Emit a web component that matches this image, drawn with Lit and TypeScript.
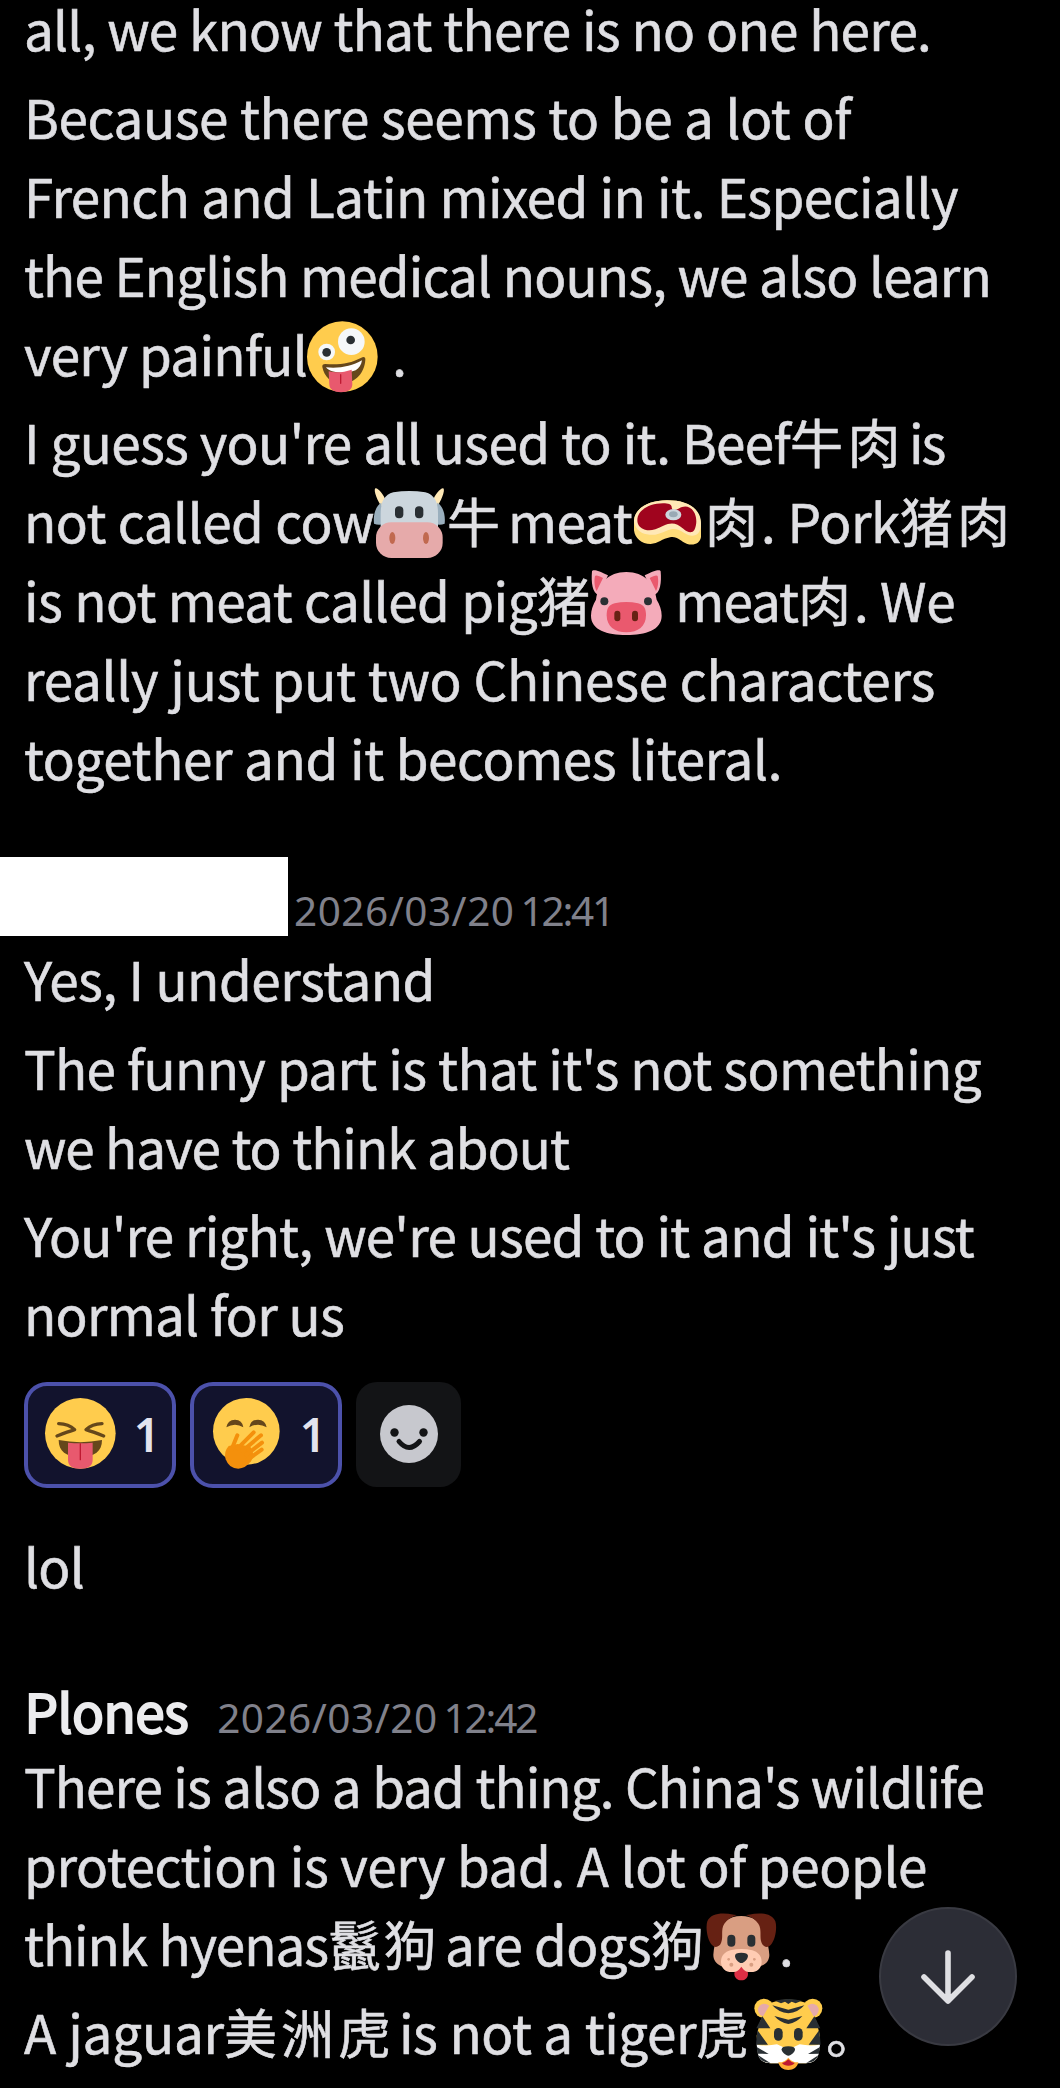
import { LitElement, html, css, svg } from "lit";
import type { SVGTemplateResult } from "lit";
import { customElement, property } from "lit/decorators.js";

interface TextRun {
  text: string;
  width: number;
}

interface EmojiRun {
  emoji: string;
}

type Run = TextRun | EmojiRun;
type Line = Run[];

const t = (text: string, width: number): TextRun => ({ text, width });
const e = (emoji: string): EmojiRun => ({ emoji });

const emojis: Record<string, SVGTemplateResult> = {
  zany: svg`
    <circle cx="106" cy="107" r="106" fill="#ffcc4d" />
    <circle cx="133" cy="62" r="40" fill="#f5f8fa" />
    <circle cx="59" cy="93" r="25" fill="#f5f8fa" />
    <circle cx="131" cy="57" r="13" fill="#292f33" />
    <circle cx="59" cy="94" r="13" fill="#292f33" />
    <path d="M46 138c-1-6 2-9 9-9 44 3 75-2 108-19 8-4 13-1 12 7-3 39-29 68-66 70-34 2-57-18-63-49z" fill="#65471b" />
    <path d="M57 139c40 4 77-3 108-21-2 14-9 24-19 30-31 12-78 8-89-9z" fill="#fff" />
    <path d="M65 151c21 5 46 3 69-5l2 44c0 16-13 24-34 24s-35-8-35-24z" fill="#e8596e" />
    <path d="M101 161v26" stroke="#be1931" stroke-width="4" stroke-linecap="round" />
  `,
  cow: svg`
    <path d="M4 1C11-2 31 22 35 38L24 58C12 42-3 7 4 1zM208 1c-7-3-27 21-31 37l11 20C200 42 215 7 208 1z" fill="#ffe8b6" />
    <path d="M22 44C5 54-3 80 0 107q14 6 29 1zM190 44c17 10 25 36 22 63q-14 6-29 1z" fill="#9aafbd" />
    <path d="M58 13Q106 5 154 13C184 20 192 48 192 75v49H20V75c0-27 8-55 38-62z" fill="#ccd6dd" />
    <rect x="6" y="103" width="200" height="107" rx="46" fill="#e6aaaa" />
    <rect x="63" y="55" width="25" height="36" rx="12" fill="#292f33" />
    <rect x="123" y="55" width="25" height="36" rx="12" fill="#292f33" />
    <ellipse cx="55" cy="150" rx="9" ry="18" fill="#c1694f" />
    <ellipse cx="156" cy="150" rx="9" ry="18" fill="#c1694f" />
  `,
  meat: svg`
    <path d="M6 100C7 62 49 37 105 37c62 0 102 24 102 76v34c-3 20-23 27-43 20-19-7-28-23-50-19-23 4-36 19-58 20-28 0-47-17-50-41z" fill="#ffdc79" />
    <path d="M6 98C7 62 49 37 105 37c62 0 102 24 102 70 0 40-29 42-50 28-20-14-34-15-53-7-25 11-38 15-59 11-23-4-37-20-39-41z" fill="#ffe8b6" />
    <path d="M16 97c0-31 35-50 77-51 17 0 24 3 26 10 0 10 7 14 23 5 8-5 20-8 31-2 21 12 25 45 14 67-8 12-22 6-33-4-21-18-36-20-60-9-25 12-39 17-55 12-14-4-23-14-23-28z" fill="#a0041e" />
    <ellipse cx="124" cy="80" rx="24" ry="17" fill="#ccd6dd" />
    <ellipse cx="124" cy="79" rx="13" ry="9" fill="#99aab5" />
  `,
  pig: svg`
    <path d="M3 13C4 6 22 9 51 25L24 85C4 79 0 47 3 13zM209 13c-1-7-19-4-48 12l27 60c20-6 24-38 21-72z" fill="#f4abba" />
    <path d="M12 27c3-4 13 0 24 6L17 72C10 62 9 39 12 27zM200 27c-3-4-13 0-24 6l19 39c7-10 8-33 5-45z" fill="#ea596e" />
    <path d="M106 15c55 0 84 34 91 83 9 15 15 31 15 48 0 43-48 58-106 58S0 189 0 146c0-17 6-33 15-48 7-49 36-83 91-83z" fill="#f4abba" />
    <path d="M71 109q35-8 70 0c19 5 24 17 24 36 0 33-24 51-59 51s-59-18-59-51c0-19 5-31 24-36z" fill="#ea596e" />
    <circle cx="40" cy="103" r="12" fill="#292f33" />
    <circle cx="171" cy="103" r="12" fill="#292f33" />
    <rect x="70" y="131" width="18" height="32" rx="9" fill="#662113" />
    <rect x="123" y="131" width="18" height="32" rx="9" fill="#662113" />
  `,
  dog: svg`
    <g transform="translate(0 9)">
      <path d="M106 9c38 0 65 22 73 55 4 22 10 42 11 61 0 32-33 43-84 43s-84-11-84-43c1-19 7-39 11-61C41 31 68 9 106 9z" fill="#d99e82" />
      <path d="M84 5C48-2 15 0 4 25c-6 19 0 57 14 71 9 10 22 6 27-6 8-18-2-40 10-58C63 20 76 12 92 6zM128 5c36-7 69-5 80 20 6 19 0 57-14 71-9 10-22 6-27-6-8-18 2-40-10-58-8-12-21-20-37-26z" fill="#662113" />
      <path d="M85 182q0-18 21-24 20 6 20 24c0 12-8 20-20 20s-21-8-21-20z" fill="#dd2e44" />
      <path d="M73 112q33-8 66 0c16 4 28 17 28 34 0 22-16 32-34 31-15 0-21-7-27-16-6 9-12 16-27 16-18 1-34-9-34-31 0-17 12-30 28-34z" fill="#ffccb3" />
      <rect x="64" y="65" width="24" height="36" rx="12" fill="#292f33" />
      <rect x="124" y="65" width="24" height="36" rx="12" fill="#292f33" />
      <path d="M87 128q0-9 19-9t20 9c0 9-11 22-20 22s-19-13-19-22z" fill="#292f33" />
      <circle cx="68" cy="139" r="4" fill="#d99e82" />
      <circle cx="145" cy="139" r="4" fill="#d99e82" />
      <circle cx="76" cy="155" r="6" fill="#d99e82" />
      <circle cx="136" cy="155" r="6" fill="#d99e82" />
    </g>
  `,
  tiger: svg`
    <circle cx="33" cy="28" r="29" fill="#ffcc4d" />
    <circle cx="179" cy="28" r="29" fill="#ffcc4d" />
    <circle cx="34" cy="33" r="19" fill="#e6aaaa" />
    <circle cx="178" cy="33" r="19" fill="#e6aaaa" />
    <path d="M54 11Q106-8 158 11L190 66 201 110 196 163Q190 192 158 193H54Q22 192 16 163L11 110 22 66z" fill="#ffcc4d" />
    <path d="M66 5q40-10 80 0l-18 8-12-5-10 7-10-7-12 5zM58 19l48 13 48-13q-19 22-48 24-29-2-48-24zM64 51l42 11 42-11q-17 20-42 24-25-4-42-24z" fill="#292f33" />
    <path d="M28 52 10 88h42zM13 93 9 137h36zM184 52l18 36h-42zM199 93l4 44h-36z" fill="#292f33" />
    <path d="M11 137q31 5 61-1l24 11h20l24-11q30 6 61 1l-4 28q-6 28-39 28H54Q21 193 15 165z" fill="#fff" />
    <path d="M11 144l36 21-33-1zM16 169l36 23q-29-1-36-23zM201 144l-36 21 33-1zM196 169l-36 23q29-1 36-23z" fill="#292f33" />
    <rect x="63" y="87" width="26" height="38" rx="13" fill="#292f33" />
    <rect x="123" y="87" width="26" height="38" rx="13" fill="#292f33" />
    <path d="M76 190q18 1 30-14 12 15 30 14c-3 15-14 23-30 23s-27-8-30-23z" fill="#ffac33" />
    <path d="M87 192q12-3 19-11 7 8 19 11-6 8-19 8t-19-8z" fill="#be1931" />
    <path d="M86 151q0-9 20-9t20 9c0 9-12 19-20 19s-20-10-20-19z" fill="#292f33" />
  `,
  squint: svg`
    <circle cx="106" cy="106" r="106" fill="#ffcc4d" />
    <path d="M41 77q30 1 48 18-19 6-53 19M171 77q-30 1-48 18 19 6 53 19" fill="none" stroke="#65471b" stroke-width="10" stroke-linecap="round" stroke-linejoin="round" />
    <path d="M41 126q65 13 130 0c0 34-22 51-65 51s-65-17-65-51z" fill="#65471b" />
    <path d="M69 134q37 4 74 0v51c0 18-12 27-37 27s-37-9-37-27z" fill="#e8596e" />
    <path d="M106 137v48" stroke="#be1931" stroke-width="4" stroke-linecap="round" />
  `,
  giggle: svg`
    <circle cx="106" cy="100" r="100" fill="#ffcc4d" />
    <path d="M46 88q4-23 26-23t25 23q-12-8-25-8t-26 8zM115 88q4-23 26-23t26 23q-13-8-26-8t-26 8z" fill="#65471b" />
    <path d="M44 184q-7-22 9-40l27-6 38 8q16 24 2 44-17 22-38 22-28 0-38-28z" fill="#f4900c" />
    <path d="M61 156 79 112M80 151l48-48M94 159l56-47M106 170l47-36M110 185l42-30" stroke="#f4900c" stroke-width="12" stroke-linecap="round" />
  `,
};

@customElement("emoji-icon")
export class EmojiIcon extends LitElement {
  static styles = css`
    :host {
      display: inline-block;
      width: 71px;
      height: 71px;
      vertical-align: -15.5px;
    }

    svg {
      display: block;
      width: 100%;
      height: 100%;
      overflow: visible;
    }
  `;

  @property({ type: String }) name = "";

  render() {
    return html`<svg viewBox="0 0 213 213">${emojis[this.name]}</svg>`;
  }
}

@customElement("chat-message")
export class ChatMessage extends LitElement {
  static styles = css`
    :host {
      display: block;
    }

    .line {
      height: 79px;
      line-height: 79px;
      white-space: pre;
    }

    .run {
      display: inline-block;
      white-space: pre;
      word-spacing: 0.5px;
      -webkit-text-stroke: 0.6px currentColor;
    }

    .emoji {
      margin-right: 2px;
    }
  `;

  @property({ type: Array }) lines: Line[] = [];

  updated() {
    this.renderRoot.querySelectorAll<HTMLElement>(".run").forEach((run) => {
      const target = Number(run.dataset.width);
      const length = (run.textContent ?? "").length;
      run.style.letterSpacing = "0px";
      const natural = run.getBoundingClientRect().width;
      run.style.letterSpacing = `${(target - natural) / length}px`;
    });
  }

  private renderRun(run: Run) {
    if ("emoji" in run) {
      return html`<emoji-icon class="emoji" name=${run.emoji}></emoji-icon>`;
    }
    return html`<span class="run" data-width=${run.width}>${run.text}</span>`;
  }

  render() {
    return this.lines.map(
      (line) =>
        html`<div class="line">${line.map((run) => this.renderRun(run))}</div>`,
    );
  }
}

@customElement("app-root")
export class AppRoot extends LitElement {
  static styles = css`
    :host {
      position: relative;
      display: block;
      box-sizing: border-box;
      width: 1060px;
      height: 2088px;
      overflow: hidden;
      background: #000;
      color: #dfdfe3;
      font-family: "Noto Sans CJK SC", "Noto Sans", sans-serif;
      font-size: 53px;
    }

    .group {
      display: flex;
      flex-direction: column;
      gap: 9.4px;
      padding-left: 24px;
    }

    .group.first {
      margin-top: -11.4px;
    }

    .header {
      display: flex;
    }

    .header.hidden-name {
      height: 79px;
      margin: 59.4px 0 3.4px;
      align-items: flex-end;
      gap: 6px;
    }

    .header.named {
      height: 72px;
      margin: 69px 0 0 24.5px;
      line-height: 72px;
      align-items: baseline;
      gap: 29px;
    }

    .cover {
      width: 288px;
      height: 79px;
      background: #fff;
    }

    .name {
      letter-spacing: -0.6px;
      color: #ececee;
      -webkit-text-stroke: 2px currentColor;
    }

    .time {
      display: flex;
      gap: 6px;
      font-family: "Noto Sans", sans-serif;
      font-size: 40.5px;
      color: #80818b;
    }

    .date {
      letter-spacing: 0.5px;
    }

    .clock {
      letter-spacing: -2.2px;
    }

    .hidden-name .time {
      line-height: 50px;
    }

    .reactions {
      display: flex;
      gap: 14px;
      margin: 29px 0 38px 24px;
    }

    .reaction {
      display: flex;
      box-sizing: border-box;
      align-items: center;
      justify-content: space-between;
      width: 152px;
      height: 106px;
      padding: 0 12px 2px 17px;
      border: 4px solid #4c51ab;
      border-radius: 23px;
      background: #12132d;
    }

    .count {
      font-family: "Noto Sans", sans-serif;
      font-size: 46px;
      font-weight: 600;
      line-height: 60px;
      color: #e3e3ee;
    }

    .add {
      display: flex;
      align-items: center;
      justify-content: center;
      width: 105px;
      height: 105px;
      border-radius: 21px;
      background: #131416;
    }

    .jump {
      position: absolute;
      top: 1907px;
      left: 879px;
      display: flex;
      box-sizing: border-box;
      align-items: center;
      justify-content: center;
      width: 138px;
      height: 139px;
      border: 2px solid #393a42;
      border-radius: 50%;
      background: #2c2d36;
    }
  `;

  private opening: Line[][] = [
    [[t("all, we know that there is no one here.", 907)]],
    [
      [t("Because there seems to be a lot of", 827)],
      [t("French and Latin mixed in it. Especially", 934)],
      [t("the English medical nouns, we also learn", 967)],
      [t("very painful", 283), e("zany"), t(" .", 27)],
    ],
    [
      [
        t("I guess you're all used to it. Beef", 766),
        t("牛肉", 115),
        t(" ", 4),
        t("is", 35),
      ],
      [
        t("not called cow", 350),
        e("cow"),
        t("牛", 57),
        t(" ", 4),
        t("meat", 124),
        e("meat"),
        t("肉", 56),
        t(". Pork", 139),
        t("猪肉", 114),
      ],
      [
        t("is not meat called pig", 513),
        t("猪", 54),
        e("pig"),
        t(" meat", 134),
        t("肉", 56),
        t(". We", 101),
      ],
      [t("really just put two Chinese characters", 911)],
      [t("together and it becomes literal.", 758)],
    ],
  ];

  private reply: Line[][] = [
    [[t("Yes, I understand", 411)]],
    [
      [t("The funny part is that it's not something", 957)],
      [t("we have to think about", 545)],
    ],
    [
      [t("You're right, we're used to it and it's just", 950)],
      [t("normal for us", 320)],
    ],
  ];

  private closing: Line[][] = [
    [
      [t("There is also a bad thing. China's wildlife", 960)],
      [t("protection is very bad. A lot of people", 903)],
      [
        t("think hyenas", 304),
        t("鬣狗", 111),
        t(" ", 6),
        t("are dogs", 206),
        t("狗", 55),
        e("dog"),
        t(".", 14),
      ],
    ],
    [
      [
        t("A jaguar", 200),
        t("美洲虎", 171),
        t(" ", 4),
        t("is not a tiger", 297),
        t("虎", 57),
        e("tiger"),
        t("。", 55),
      ],
    ],
  ];

  private renderMessages(messages: Line[][]) {
    return messages.map(
      (lines) => html`<chat-message .lines=${lines}></chat-message>`,
    );
  }

  private renderTime(date: string, clock: string) {
    return html`
      <span class="time">
        <span class="date">${date}</span>
        <span class="clock">${clock}</span>
      </span>
    `;
  }

  render() {
    return html`
      <div class="group first">${this.renderMessages(this.opening)}</div>

      <div class="header hidden-name">
        <div class="cover"></div>
        ${this.renderTime("2026/03/20", "12:41")}
      </div>
      <div class="group">${this.renderMessages(this.reply)}</div>

      <div class="reactions">
        ${["squint", "giggle"].map(
          (name) => html`
            <div class="reaction">
              <emoji-icon name=${name}></emoji-icon>
              <span class="count">1</span>
            </div>
          `,
        )}
        <div class="add">
          <svg width="58" height="58" viewBox="0 0 58 58">
            <circle cx="29" cy="29" r="29" fill="#c7c8ce" />
            <circle cx="14.5" cy="27.5" r="4.2" fill="#131416" />
            <circle cx="43.5" cy="27.5" r="4.2" fill="#131416" />
            <path
              d="M19 36.5q10 12 20.500 0"
              fill="none"
              stroke="#131416"
              stroke-width="5"
              stroke-linecap="round"
            />
          </svg>
        </div>
      </div>

      <div class="group">${this.renderMessages([[[t("lol", 60)]]])}</div>

      <div class="header named">
        <span class="name">Plones</span>
        ${this.renderTime("2026/03/20", "12:42")}
      </div>
      <div class="group">${this.renderMessages(this.closing)}</div>

      <div class="jump">
        <svg width="54" height="54" viewBox="0 0 54 54">
          <path
            d="M27 3v48M3 27l24 24 24-24"
            fill="none"
            stroke="#dfdfe3"
            stroke-width="5.600"
            stroke-linecap="round"
            stroke-linejoin="round"
          />
        </svg>
      </div>
    `;
  }
}
